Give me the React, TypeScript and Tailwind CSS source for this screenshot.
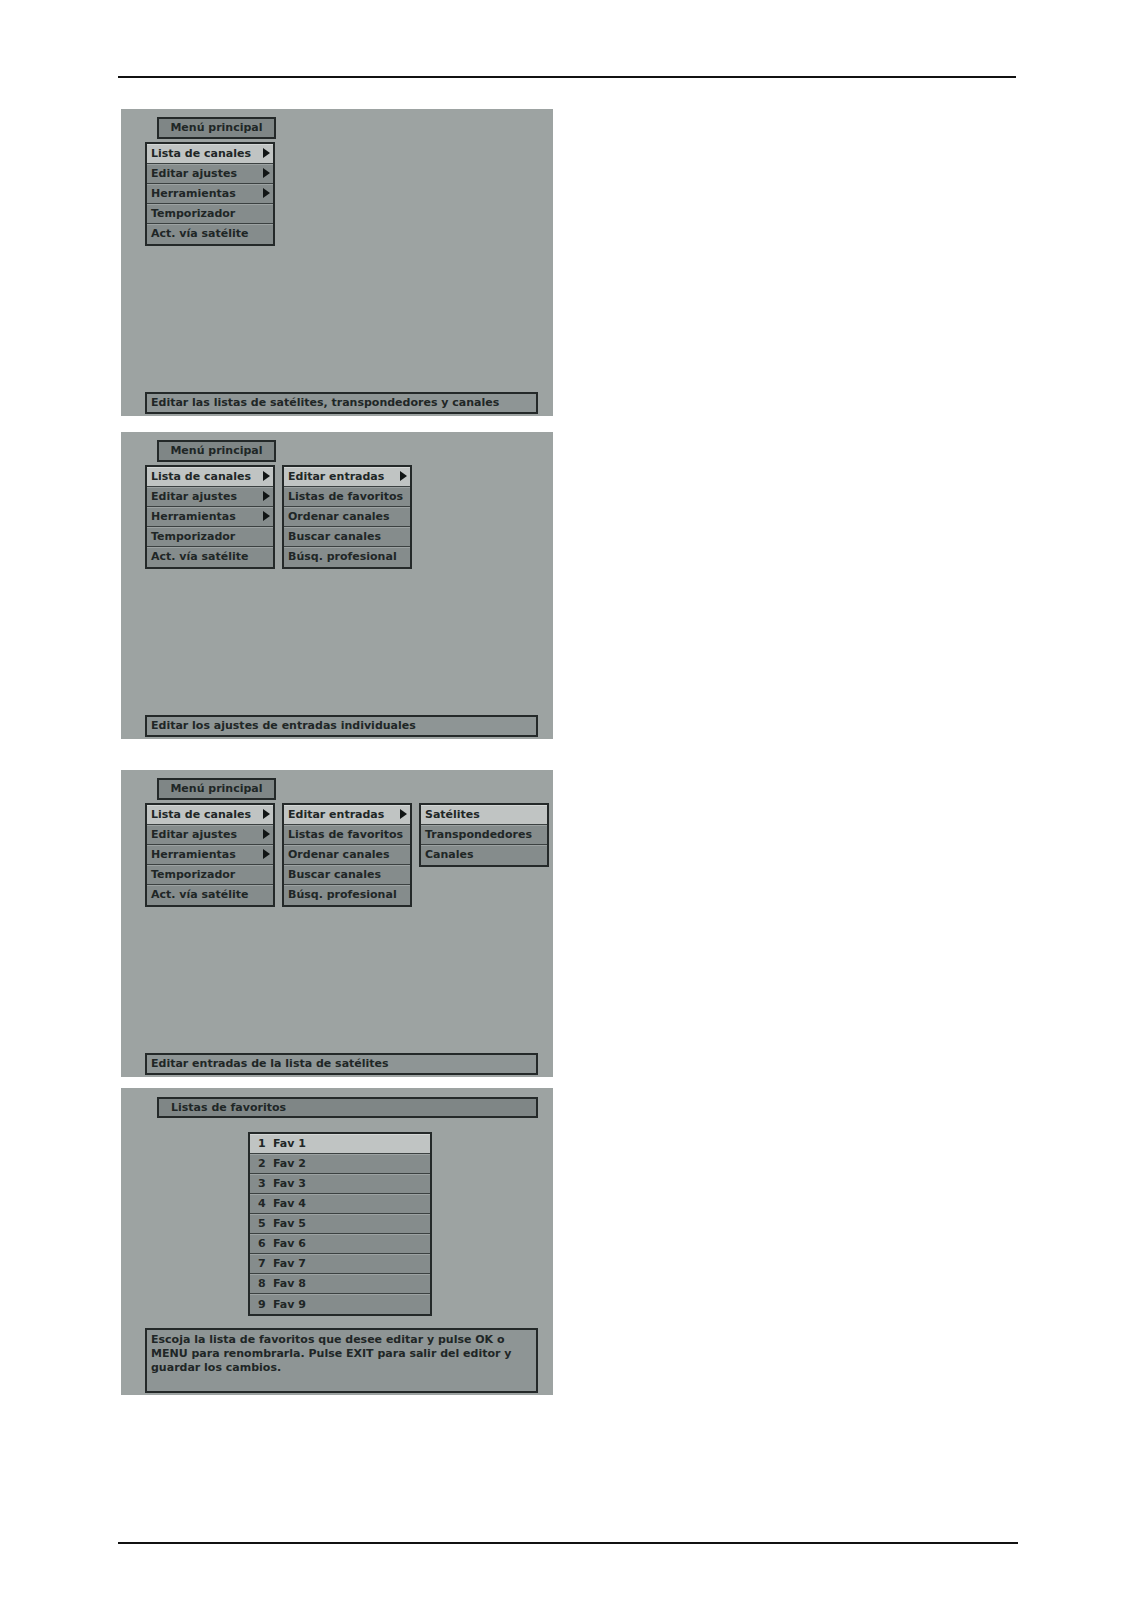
import React from "react";

const font = { fontFamily: '"DejaVu Sans", Verdana, sans-serif' };

function Arrow() {
  return (
    <svg width="7" height="10" viewBox="0 0 7 10" className="shrink-0">
      <polygon points="0,0 7,5 0,10" fill="#111515" />
    </svg>
  );
}

type Item = { label: string; arrow?: boolean };

const txt = "text-[11px] font-bold leading-none text-[#202626] whitespace-nowrap";

function Menu({ items, active = 0 }: { items: Item[]; active?: number }) {
  return (
    <div className="w-[130px] border-2 border-[#242929] bg-[#838a8a] flex flex-col">
      {items.map((it, i) => (
        <div
          key={i}
          className={`h-[20px] flex items-center justify-between pl-[4px] pr-[3px] pb-[2px] border-t border-b ${
            i === active
              ? "bg-[#c0c4c3] border-t-[#d4d7d6] border-b-[#3b4141]"
              : "bg-[#858c8c] border-t-[#9ca2a2] border-b-[#3b4141]"
          } ${i === items.length - 1 ? "border-b-0" : ""}`}
        >
          <span className={txt}>{it.label}</span>
          {it.arrow && <Arrow />}
        </div>
      ))}
    </div>
  );
}

const mainItems: Item[] = [
  { label: "Lista de canales", arrow: true },
  { label: "Editar ajustes", arrow: true },
  { label: "Herramientas", arrow: true },
  { label: "Temporizador" },
  { label: "Act. vía satélite" },
];

const subItems: Item[] = [
  { label: "Editar entradas", arrow: true },
  { label: "Listas de favoritos" },
  { label: "Ordenar canales" },
  { label: "Buscar canales" },
  { label: "Búsq. profesional" },
];

const thirdItems: Item[] = [{ label: "Satélites" }, { label: "Transpondedores" }, { label: "Canales" }];

function Title({ text }: { text: string }) {
  return (
    <div className="ml-[12px] w-[119px] h-[22px] border-2 border-[#242929] bg-[#7f8686] flex items-center justify-center pb-[1px]">
      <span className={txt}>{text}</span>
    </div>
  );
}

function Status({ text }: { text: string }) {
  return (
    <div className="w-[393px] h-[22px] border-2 border-[#242929] bg-[#8e9595] flex items-center pl-[4px] pb-[1px]">
      <span className={txt}>{text}</span>
    </div>
  );
}

function Panel({ children }: { children: React.ReactNode }) {
  return (
    <div className="ml-[121px] w-[432px] h-[307px] bg-[#9da3a2] pl-[24px] pt-[8px] pb-[2px] flex flex-col">
      {children}
    </div>
  );
}

export default function App() {
  return (
    <div className="w-[1123px] h-[1618px] bg-white flex flex-col" style={font}>
      <div className="mt-[76px] ml-[118px] w-[898px] h-[2px] bg-[#111]" />
      {/* Panel 1 */}
      <div className="mt-[31px]">
        <Panel>
          <Title text="Menú principal" />
          <div className="mt-[3px] flex gap-[7px]">
            <Menu items={mainItems} />
          </div>
          <div className="flex-1" />
          <Status text="Editar las listas de satélites, transpondedores y canales" />
        </Panel>
      </div>
      {/* Panel 2 */}
      <div className="mt-[16px]">
        <Panel>
          <Title text="Menú principal" />
          <div className="mt-[3px] flex gap-[7px] items-start">
            <Menu items={mainItems} />
            <Menu items={subItems} />
          </div>
          <div className="flex-1" />
          <Status text="Editar los ajustes de entradas individuales" />
        </Panel>
      </div>
      {/* Panel 3 */}
      <div className="mt-[31px]">
        <Panel>
          <Title text="Menú principal" />
          <div className="mt-[3px] flex gap-[7px] items-start">
            <Menu items={mainItems} />
            <Menu items={subItems} />
            <Menu items={thirdItems} />
          </div>
          <div className="flex-1" />
          <Status text="Editar entradas de la lista de satélites" />
        </Panel>
      </div>
      {/* Panel 4 */}
      <div className="mt-[11px]">
        <div className="ml-[121px] w-[432px] h-[307px] bg-[#9da3a2] pl-[24px] pt-[9px] pb-[2px] flex flex-col">
          <div className="ml-[12px] w-[381px] h-[21px] border-2 border-[#242929] bg-[#7f8686] flex items-center pl-[12px] pb-[1px]">
            <span className={txt}>Listas de favoritos</span>
          </div>
          <div className="mt-[14px] ml-[103px] w-[184px] border-2 border-[#242929] bg-[#838a8a] flex flex-col">
            {Array.from({ length: 9 }, (_, i) => (
              <div
                key={i}
                className={`h-[20px] flex items-center pl-[8px] pb-[1px] border-t ${
                  i === 0 ? "bg-[#c0c4c3] border-t-[#d4d7d6]" : "bg-[#858c8c] border-t-[#9ca2a2]"
                } ${i < 8 ? "border-b border-b-[#3b4141]" : ""}`}
              >
                <span className={`w-[15px] ${txt}`}>{i + 1}</span>
                <span className={txt}>Fav {i + 1}</span>
              </div>
            ))}
          </div>
          <div className="flex-1" />
          <div className="w-[393px] h-[65px] border-2 border-[#242929] bg-[#8e9595] pl-[4px] pt-[3px]">
            <p className="text-[11px] font-bold leading-[14px] text-[#202626]">
              Escoja la lista de favoritos que desee editar y pulse OK o
              <br />
              MENU para renombrarla. Pulse EXIT para salir del editor y
              <br />
              guardar los cambios.
            </p>
          </div>
        </div>
      </div>
      <div className="mt-[147px] ml-[118px] w-[900px] h-[2px] bg-[#111]" />
    </div>
  );
}
